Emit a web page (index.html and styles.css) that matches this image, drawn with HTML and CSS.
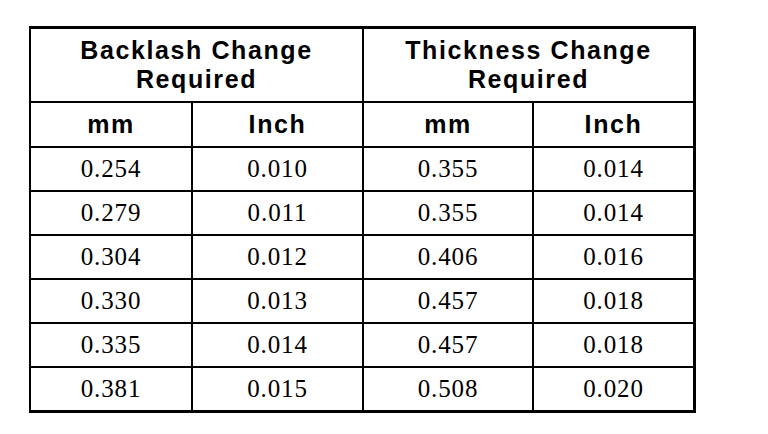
FILE: index.html
```html
<!DOCTYPE html>
<html lang="en">
<head>
  <meta charset="UTF-8">
  <meta name="viewport" content="width=device-width, initial-scale=1.0">
  <title>Backlash and Thickness Change</title>
  <link rel="stylesheet" href="styles.css">
</head>
<body>
  <table class="change-table">
    <thead>
      <tr class="group-row">
        <th colspan="2" class="col-2">Backlash Change<br>Required</th>
        <th colspan="2" class="col-4">Thickness Change<br>Required</th>
      </tr>
      <tr class="unit-row">
        <th class="col-1">mm</th>
        <th class="col-2">Inch</th>
        <th class="col-3">mm</th>
        <th class="col-4">Inch</th>
      </tr>
    </thead>
    <tbody>
      <tr>
        <td>0.254</td><td>0.010</td><td>0.355</td><td class="col-4">0.014</td>
      </tr>
      <tr>
        <td>0.279</td><td>0.011</td><td>0.355</td><td class="col-4">0.014</td>
      </tr>
      <tr>
        <td>0.304</td><td>0.012</td><td>0.406</td><td class="col-4">0.016</td>
      </tr>
      <tr>
        <td>0.330</td><td>0.013</td><td>0.457</td><td class="col-4">0.018</td>
      </tr>
      <tr>
        <td>0.335</td><td>0.014</td><td>0.457</td><td class="col-4">0.018</td>
      </tr>
      <tr class="last-row">
        <td>0.381</td><td>0.015</td><td>0.508</td><td class="col-4">0.020</td>
      </tr>
    </tbody>
  </table>
</body>
</html>
```

FILE: styles.css
```css
body {
  margin: 0;
  padding: 0;
  background-color: #fff;
  color: #000;
}
.change-table {
  margin: 26px 0 0 29px;
  border-collapse: separate;
  border-spacing: 0;
  border-top: 3px solid #000;
  border-left: 2px solid #000;
}
.change-table th,
.change-table td {
  padding: 0;
  text-align: center;
  vertical-align: middle;
  border-right: 2px solid #000;
  border-bottom: 2px solid #000;
}
.change-table th {
  font-family: "Liberation Sans", Arial, sans-serif;
  font-size: 25px;
  font-weight: bold;
  letter-spacing: 1.6px;
}
.change-table td {
  height: 42px;
  font-family: "Liberation Serif", "Times New Roman", serif;
  font-size: 25px;
  letter-spacing: 0.9px;
}
.group-row th {
  height: 72px;
  line-height: 29px;
}
.unit-row th {
  height: 43px;
}
.unit-row .col-1 {
  width: 160px;
}
.unit-row .col-2 {
  width: 169px;
}
.unit-row .col-3 {
  width: 168px;
}
.unit-row .col-4 {
  width: 159px;
}
.change-table .col-4 {
  border-right-width: 3px;
}
.last-row td {
  border-bottom-width: 3px;
}
```
